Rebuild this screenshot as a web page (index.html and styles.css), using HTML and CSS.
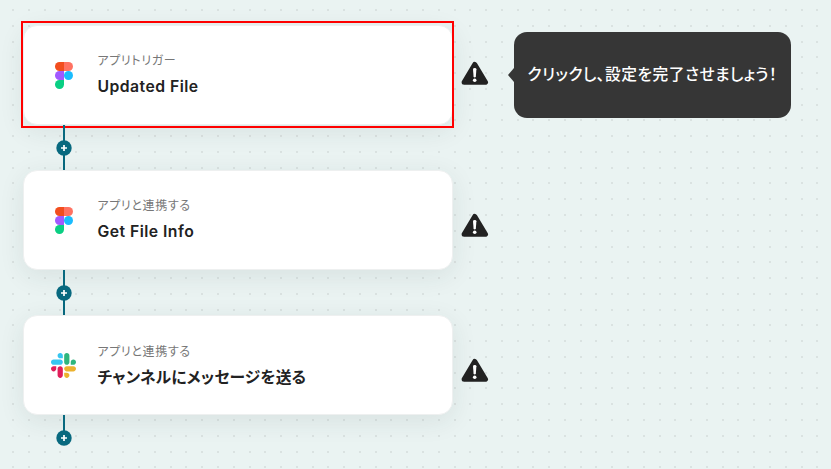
FILE: index.html
```html
<!DOCTYPE html>
<html lang="ja">
<head>
<meta charset="utf-8">
<title>フロー</title>
<link rel="stylesheet" href="styles.css">
</head>
<body>
<svg class="dots" width="831" height="469" aria-hidden="true"></svg>
<svg class="defs" width="0" height="0" aria-hidden="true">
  <symbol id="figma" viewBox="0 0 18 27">
    <path fill="#f24e1e" d="M4.5 0H9v9H4.500a4.500 4.500 0 0 1 0-9z"/>
    <path fill="#ff7262" d="M9 0h4.500a4.500 4.500 0 0 1 0 9H9z"/>
    <path fill="#a259ff" d="M4.500 9H9v9H4.500a4.500 4.500 0 0 1 0-9z"/>
    <circle fill="#1abcfe" cx="13.500" cy="13.500" r="4.500"/>
    <path fill="#0acf83" d="M4.500 18H9v4.500A4.500 4.500 0 1 1 4.500 18z"/>
  </symbol>
  <symbol id="slack" viewBox="0 0 122.8 122.8">
    <path fill="#e01e5a" d="M25.800 77.600c0 7.100-5.800 12.900-12.900 12.900S0 84.700 0 77.600s5.800-12.900 12.900-12.900h12.900zm6.500 0c0-7.100 5.800-12.900 12.900-12.900s12.900 5.800 12.900 12.900v32.300c0 7.100-5.800 12.900-12.900 12.900s-12.900-5.800-12.900-12.900z"/>
    <path fill="#36c5f0" d="M45.200 25.800c-7.100 0-12.900-5.800-12.900-12.900S38.100 0 45.200 0s12.900 5.800 12.900 12.900v12.900zm0 6.500c7.100 0 12.900 5.800 12.900 12.900s-5.800 12.900-12.900 12.900H12.900C5.800 58.100 0 52.300 0 45.200s5.800-12.900 12.900-12.900z"/>
    <path fill="#2eb67d" d="M97 45.200c0-7.100 5.800-12.900 12.900-12.900s12.900 5.800 12.900 12.900-5.800 12.900-12.900 12.900H97zm-6.500 0c0 7.100-5.800 12.900-12.900 12.900s-12.900-5.800-12.900-12.900V12.900C64.700 5.800 70.500 0 77.600 0s12.900 5.800 12.900 12.900z"/>
    <path fill="#ecb22e" d="M77.600 97c7.100 0 12.900 5.800 12.900 12.900s-5.800 12.900-12.900 12.900-12.900-5.800-12.900-12.900V97zm0-6.500c-7.100 0-12.900-5.800-12.900-12.900s5.800-12.900 12.900-12.900h32.300c7.100 0 12.900 5.800 12.900 12.900s-5.800 12.900-12.900 12.900z"/>
  </symbol>
  <symbol id="warn" viewBox="0 0 28 25">
    <path fill="#222" stroke="#222" stroke-width="5" stroke-linejoin="round" d="M13.700 3.400L24.500 21.300H3.100z"/>
    <path fill="#fff" d="M12 8.300Q12 7 13.700 7T15.400 8.300L14.800 16Q13.700 16.800 12.600 16z"/>
    <circle fill="#fff" cx="13.700" cy="19.200" r="1.800"/>
  </symbol>
  <symbol id="plus" viewBox="0 0 16 16">
    <circle cx="8" cy="8" r="7.700" fill="#08697f"/>
    <path d="M8 5v6M5 8h6" stroke="#fff" stroke-width="1.700"/>
  </symbol>
</svg>
<main class="flow">
  <div class="row row-first">
    <section class="card">
      <div class="logo"><svg class="figma"><use href="#figma"/></svg></div>
      <div class="copy"><div class="kind">アプリトリガー</div><div class="name">Updated File</div></div>
      <div class="selection"></div>
    </section>
    <svg class="warn"><use href="#warn"/></svg>
    <div class="tip"><span class="tip-text">クリックし、設定を完了させましょう！</span></div>
  </div>
  <div class="link"><svg class="plus"><use href="#plus"/></svg></div>
  <div class="row">
    <section class="card">
      <div class="logo"><svg class="figma"><use href="#figma"/></svg></div>
      <div class="copy"><div class="kind">アプリと連携する</div><div class="name">Get File Info</div></div>
    </section>
    <svg class="warn"><use href="#warn"/></svg>
  </div>
  <div class="link"><svg class="plus"><use href="#plus"/></svg></div>
  <div class="row row-last">
    <section class="card">
      <div class="logo"><svg class="slack"><use href="#slack"/></svg></div>
      <div class="copy"><div class="kind">アプリと連携する</div><div class="name name-ja">チャンネルにメッセージを送る</div></div>
    </section>
    <svg class="warn"><use href="#warn"/></svg>
  </div>
  <div class="link link-end"><svg class="plus"><use href="#plus"/></svg></div>
</main>
<script src="dots.js"></script>
</body>
</html>
```
FILE: styles.css
```css
* { box-sizing: border-box; }
body {
  margin: 0;
  width: 831px;
  height: 469px;
  overflow: hidden;
  background: #eaf3f2;
  font-family: Inter, "Noto Sans CJK JP", sans-serif;
  color: #222;
}
.dots { position: absolute; left: 0; top: 0; fill: #dae2e1; }
.defs { position: absolute; }
.flow { position: relative; padding: 25px 0 0 23px; }
.row { display: flex; align-items: center; height: 100px; }
.card {
  position: relative;
  display: flex;
  align-items: center;
  flex: none;
  width: 430px;
  height: 100px;
  padding-left: 23px;
  background: #fff;
  border: 1px solid #eef0f0;
  border-radius: 14px;
  box-shadow: 0 6px 26px rgba(30, 50, 50, .09);
}
.selection {
  position: absolute;
  left: -3px;
  top: -5px;
  width: 433px;
  height: 107px;
  border: 2px solid #f00;
}
.logo { width: 34px; display: flex; justify-content: center; }
.figma { width: 18px; height: 27px; margin-top: 1px; }
.slack { width: 25px; height: 25px; margin: 1px 1px 0 0; }
.copy { margin-left: 16.4px; margin-top: -1px; white-space: nowrap; }
.row-last .copy { margin-top: 1px; }
.kind {
  height: 20px;
  font-size: 12px;
  line-height: 20px;
  color: #777;
  font-feature-settings: "palt";
  letter-spacing: .65px;
}
.name {
  height: 24px;
  margin-top: 4px;
  font-size: 15.75px;
  line-height: 24px;
  font-weight: 600;
  letter-spacing: .47px;
}
.name-ja { font-weight: 700; font-feature-settings: "palt"; letter-spacing: .18px; }
.warn { flex: none; width: 28px; height: 25px; margin: 11px 0 0 8px; }
.row-first .warn { margin-top: -4px; }
.tip {
  position: relative;
  display: flex;
  align-items: center;
  width: 277px;
  height: 86px;
  margin-left: 25px;
  padding-left: 13.5px;
  border-radius: 13px;
  background: #363636;
  color: #fff;
}
.tip::before {
  content: "";
  position: absolute;
  left: -6px;
  top: 36px;
  width: 6px;
  height: 14px;
  background: #363636;
  clip-path: polygon(0 50%, 100% 0, 100% 100%);
}
.tip-text {
  font-size: 15.75px;
  font-weight: 500;
  line-height: 24px;
  white-space: nowrap;
  font-feature-settings: "palt";
  letter-spacing: .47px;
}
.link {
  position: relative;
  display: flex;
  align-items: center;
  justify-content: center;
  width: 2px;
  height: 45px;
  margin-left: 40px;
  background: #08697f;
}
.link-end { height: 16px; }
.plus { flex: none; width: 16px; height: 16px; }
.link-end .plus { margin-top: 30px; }
```
FILE: dots.js
```js
const grid = document.querySelector(".dots");
const step = 15.77;
for (let row = 0; row < 30; row++) {
  for (let col = 0; col < 52; col++) {
    const dot = document.createElementNS("http://www.w3.org/2000/svg", "rect");
    dot.setAttribute("x", Math.round(12 + col * step));
    dot.setAttribute("y", Math.round(9 + row * step));
    dot.setAttribute("width", 2);
    dot.setAttribute("height", 2);
    grid.appendChild(dot);
  }
}
```
